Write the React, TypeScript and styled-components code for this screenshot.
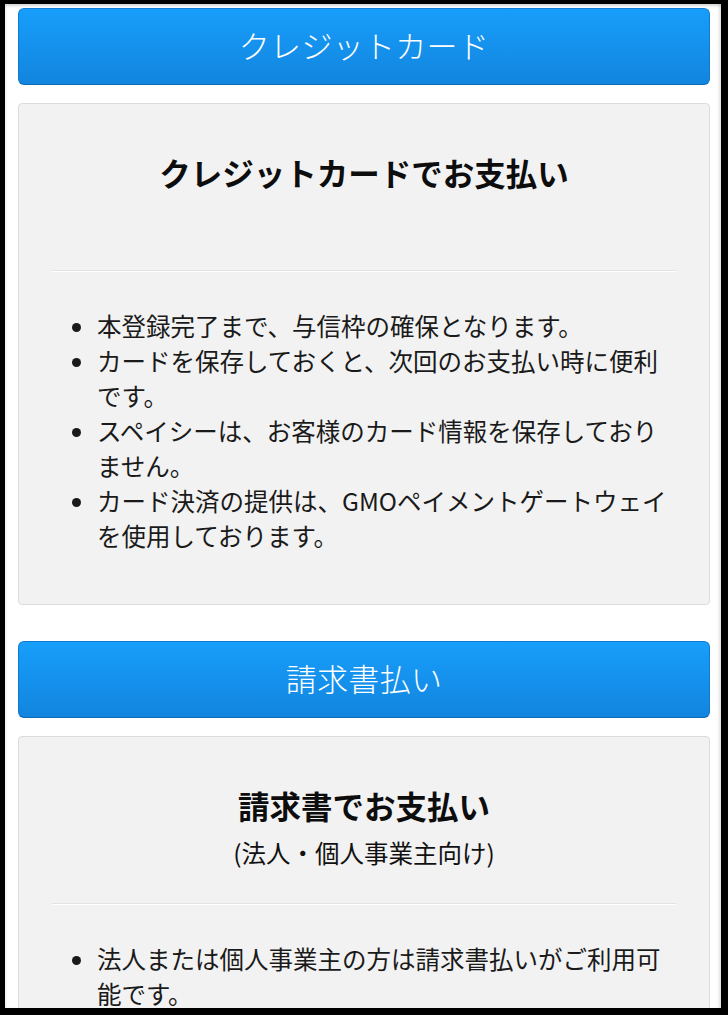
import React from 'react';
import styled, { createGlobalStyle } from 'styled-components';

const GlobalStyle = createGlobalStyle`
  html, body {
    margin: 0;
    padding: 0;
    background: #000;
  }
  body {
    font-family: "Noto Sans CJK JP", "Noto Sans", sans-serif;
    -webkit-font-smoothing: antialiased;
  }
`;

const Frame = styled.div`
  box-sizing: border-box;
  width: 728px;
  height: 1015px;
  border-style: solid;
  border-color: #000;
  border-width: 4px 7px 7px 5px;
  overflow: hidden;
`;

const Page = styled.div`
  box-sizing: border-box;
  height: 100%;
  background: #fff;
  padding: 4px 11px 0 13px;
  box-shadow: inset 1px 3px 3px -1px rgba(0, 0, 0, 0.16), inset -3px 0 3px -1px rgba(0, 0, 0, 0.12);
  overflow: hidden;
`;

const Section = styled.section`
  display: flex;
  flex-direction: column;
  gap: 18px;
  margin-bottom: 36px;
`;

const MethodButton = styled.button`
  box-sizing: border-box;
  width: 100%;
  height: 77px;
  padding: 0 0 4px;
  border: 1px solid #0f7bd2;
  border-bottom-color: #0b68b3;
  border-radius: 6px;
  background: linear-gradient(#179efb, #1285de);
  color: #fff;
  font-family: "Noto Sans CJK JP", "Noto Sans", sans-serif;
  font-size: 31px;
  font-weight: 300;
  letter-spacing: 0.3px;
  cursor: pointer;
`;

const Card = styled.div`
  background: #f2f2f2;
  border: 1px solid #dcdcdc;
  border-radius: 4px;
  padding: 0 33px 51px;
`;

const Header = styled.div`
  display: flex;
  flex-direction: column;
  align-items: center;
  gap: 10px;
  padding: 48px 0 33px;
  border-bottom: 1px solid #e2e2e2;
  box-shadow: 0 1px 0 #fff;
`;

const Title = styled.h2`
  margin: 0;
  font-size: 31.5px;
  line-height: 40px;
  font-weight: 700;
  color: #0d0d0d;
`;

const Subtitle = styled.div`
  min-height: 35px;
  font-size: 24.5px;
  line-height: 35px;
  color: #111;
`;

const Notes = styled.ul`
  margin: 37px 0 0;
  padding-left: 45px;
  font-size: 24.5px;
  line-height: 35px;
  color: #1a1a1a;
`;

interface Method {
  label: string;
  title: string;
  subtitle?: string;
  notes: string[];
}

const methods: Method[] = [
  {
    label: 'クレジットカード',
    title: 'クレジットカードでお支払い',
    notes: [
      '本登録完了まで、与信枠の確保となります。',
      'カードを保存しておくと、次回のお支払い時に便利です。',
      'スペイシーは、お客様のカード情報を保存しておりません。',
      'カード決済の提供は、GMOペイメントゲートウェイを使用しております。',
    ],
  },
  {
    label: '請求書払い',
    title: '請求書でお支払い',
    subtitle: '(法人・個人事業主向け)',
    notes: ['法人または個人事業主の方は請求書払いがご利用可能です。'],
  },
];

export default function App() {
  return (
    <>
      <GlobalStyle />
      <Frame>
        <Page>
          {methods.map(method => (
            <Section key={method.label}>
              <MethodButton type="button">{method.label}</MethodButton>
              <Card>
                <Header>
                  <Title>{method.title}</Title>
                  <Subtitle>{method.subtitle}</Subtitle>
                </Header>
                <Notes>
                  {method.notes.map(note => (
                    <li key={note}>{note}</li>
                  ))}
                </Notes>
              </Card>
            </Section>
          ))}
        </Page>
      </Frame>
    </>
  );
}
